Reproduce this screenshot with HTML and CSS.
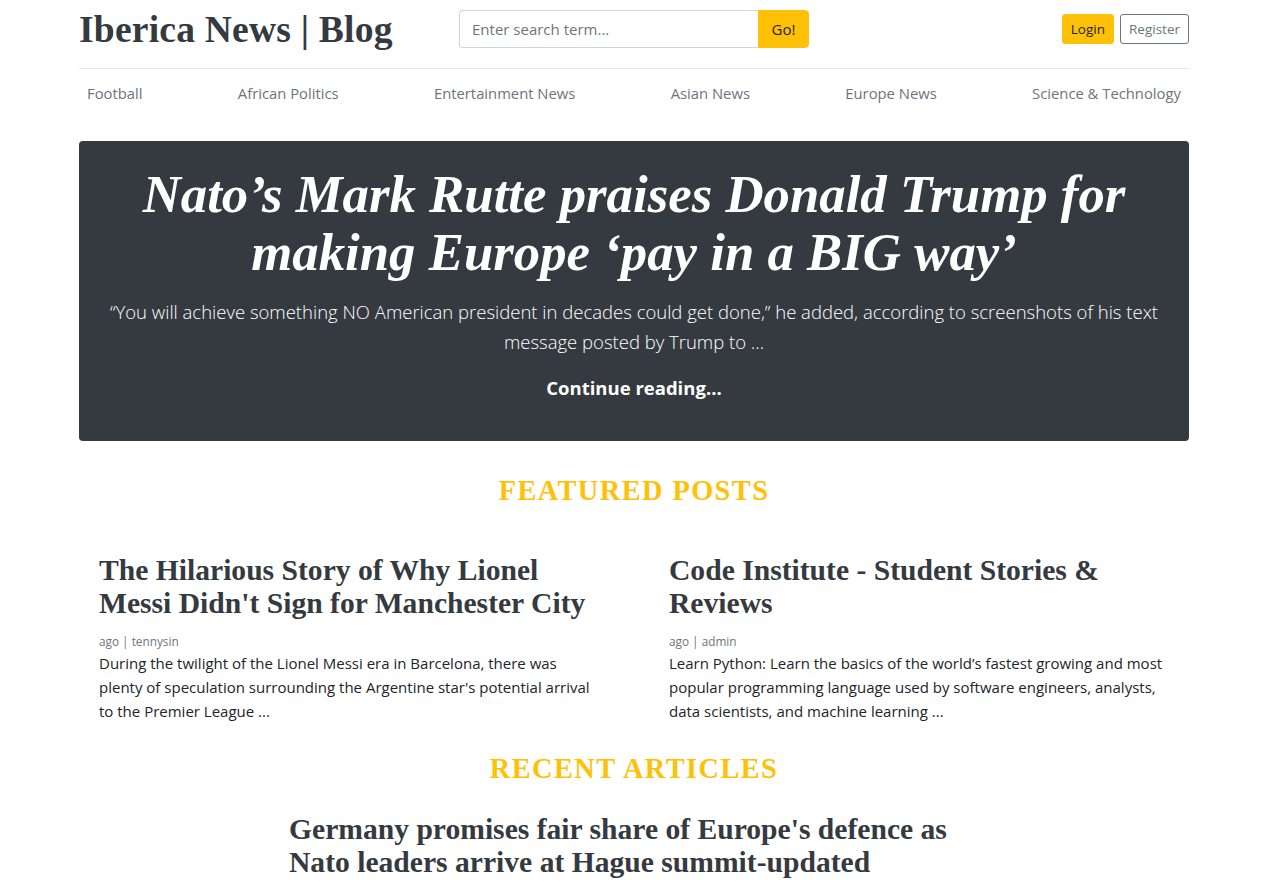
FILE: index.html
```html
<!DOCTYPE html>
<html lang="en">
<head>
<meta charset="utf-8">
<title>Iberica News | Blog</title>
<link rel="stylesheet" href="styles.css">
</head>
<body>
<div class="container">
  <header class="blog-header">
    <div class="brand">Iberica News | Blog</div>
    <form class="search">
      <input class="search-input" type="text" placeholder="Enter search term...">
      <button class="btn btn-go" type="button">Go!</button>
    </form>
    <div class="auth">
      <a class="btn btn-sm btn-warning" href="#">Login</a>
      <a class="btn btn-sm btn-outline" href="#">Register</a>
    </div>
  </header>
  <nav class="nav">
    <a class="nav-link" href="#">Football</a>
    <a class="nav-link" href="#">African Politics</a>
    <a class="nav-link" href="#">Entertainment News</a>
    <a class="nav-link" href="#">Asian News</a>
    <a class="nav-link" href="#">Europe News</a>
    <a class="nav-link" href="#">Science &amp; Technology</a>
  </nav>

  <section class="jumbotron">
    <h1 class="jumbo-title">Nato’s Mark Rutte praises Donald Trump for making Europe ‘pay in a BIG way’</h1>
    <p class="lead">“You will achieve something NO American president in decades could get done,” he added, according to screenshots of his text message posted by Trump to ...</p>
    <p class="lead more"><a href="#">Continue reading...</a></p>
  </section>

  <h2 class="section-title">Featured Posts</h2>
  <div class="row">
    <article class="post half">
      <h3 class="post-title">The Hilarious Story of Why Lionel Messi Didn't Sign for Manchester City</h3>
      <div class="meta">ago | tennysin</div>
      <p class="excerpt">During the twilight of the Lionel Messi era in Barcelona, there was plenty of speculation surrounding the Argentine star's potential arrival to the Premier League ...</p>
    </article>
    <article class="post half">
      <h3 class="post-title">Code Institute - Student Stories &amp; Reviews</h3>
      <div class="meta">ago | admin</div>
      <p class="excerpt">Learn Python: Learn the basics of the world’s fastest growing and most popular programming language used by software engineers, analysts, data scientists, and machine learning ...</p>
    </article>
  </div>

  <h2 class="section-title recent">Recent Articles</h2>
  <div class="row center">
    <article class="post wide">
      <h3 class="post-title">Germany promises fair share of Europe's defence as Nato leaders arrive at Hague summit-updated</h3>
    </article>
  </div>
</div>
</body>
</html>
```

FILE: styles.css
```css
* { box-sizing: border-box; }
html, body { margin: 0; padding: 0; }
body {
  font-family: "Open Sans", "Noto Sans", sans-serif;
  font-size: 15px;
  line-height: 1.5;
  color: #212529;
  background: #fff;
}
a { text-decoration: none; }
.container {
  width: 1110px;
  margin: 0 auto;
  position: relative;
  left: 2px;
}
.blog-header {
  display: grid;
  grid-template-columns: 350px 350px 350px;
  column-gap: 30px;
  align-items: center;
  height: 69px;
  border-bottom: 1px solid #e5e5e5;
  padding-bottom: 10px;
}
.brand {
  font-family: "Liberation Serif", "Times New Roman", serif;
  font-weight: bold;
  font-size: 37.6px;
  line-height: 1;
  color: #343a40;
  letter-spacing: 0.2px;
  white-space: nowrap;
  padding-top: 2px;
}
.search { display: flex; margin: 0; }
.search-input {
  width: 299px;
  height: 38px;
  border: 1px solid #ced4da;
  border-right: none;
  border-radius: 4px 0 0 4px;
  padding: 6px 12px;
  font-family: inherit;
  font-size: 15px;
  color: #495057;
  outline: none;
}
.search-input::placeholder { color: #6c757d; }
.btn {
  display: inline-block;
  font-family: inherit;
  border: 1px solid transparent;
  color: #212529;
  cursor: pointer;
}
.btn-go {
  width: 51px;
  height: 38px;
  background: #ffc107;
  border-color: #ffc107;
  border-radius: 0 4px 4px 0;
  font-size: 15px;
  padding: 0;
}
.auth { display: flex; justify-content: flex-end; gap: 6px; align-items: center; }
.btn-sm {
  font-size: 13.5px;
  line-height: 20px;
  padding: 4px 8px;
  border-radius: 3px;
}
.btn-warning { background: #ffc107; border-color: #ffc107; color: #212529; }
.btn-outline { border-color: #6c757d; color: #6c757d; background: #fff; }

.nav {
  display: flex;
  justify-content: space-between;
  height: 50px;
  align-items: center;
  padding-bottom: 2px;
}
.nav-link {
  color: #6c757d;
  font-size: 14.8px;
  padding: 0 8px;
}

.jumbotron {
  margin-top: 22px;
  background: #343a40;
  border-radius: 4px;
  color: #fff;
  text-align: center;
  padding: 24px 20px 38px;
}
.jumbo-title {
  font-family: "Liberation Serif", "Times New Roman", serif;
  font-style: italic;
  font-weight: bold;
  font-size: 52.8px;
  line-height: 58px;
  margin: 0 0 16px;
}
.lead {
  font-size: 18.5px;
  line-height: 30px;
  font-weight: 300;
  margin: 0 0 16px;
}
.lead.more { margin: 0; }
.lead.more a { color: #fff; font-weight: 700; }

.section-title {
  font-family: "Liberation Serif", "Times New Roman", serif;
  font-weight: bold;
  color: #ffc107;
  text-transform: uppercase;
  text-align: center;
  font-size: 28.4px;
  letter-spacing: 1.4px;
  line-height: 36px;
  margin: 32px 0 0;
}
.section-title.recent { margin-top: 28px; }
.row { display: flex; margin: 0 -15px; padding-top: 45px; }
.row.center { justify-content: center; padding-top: 26px; }
.post { padding: 0 35px; }
.half { width: 50%; }
.wide { width: 760px; }
.post-title {
  font-family: "Liberation Serif", "Times New Roman", serif;
  font-weight: bold;
  font-size: 29.6px;
  line-height: 33px;
  color: #343a40;
  margin: 0 0 11px;
}
.meta {
  font-size: 11.8px;
  color: #6c757d;
  line-height: 20px;
}
.excerpt {
  margin: 0;
  font-size: 15px;
  line-height: 24px;
}
```
